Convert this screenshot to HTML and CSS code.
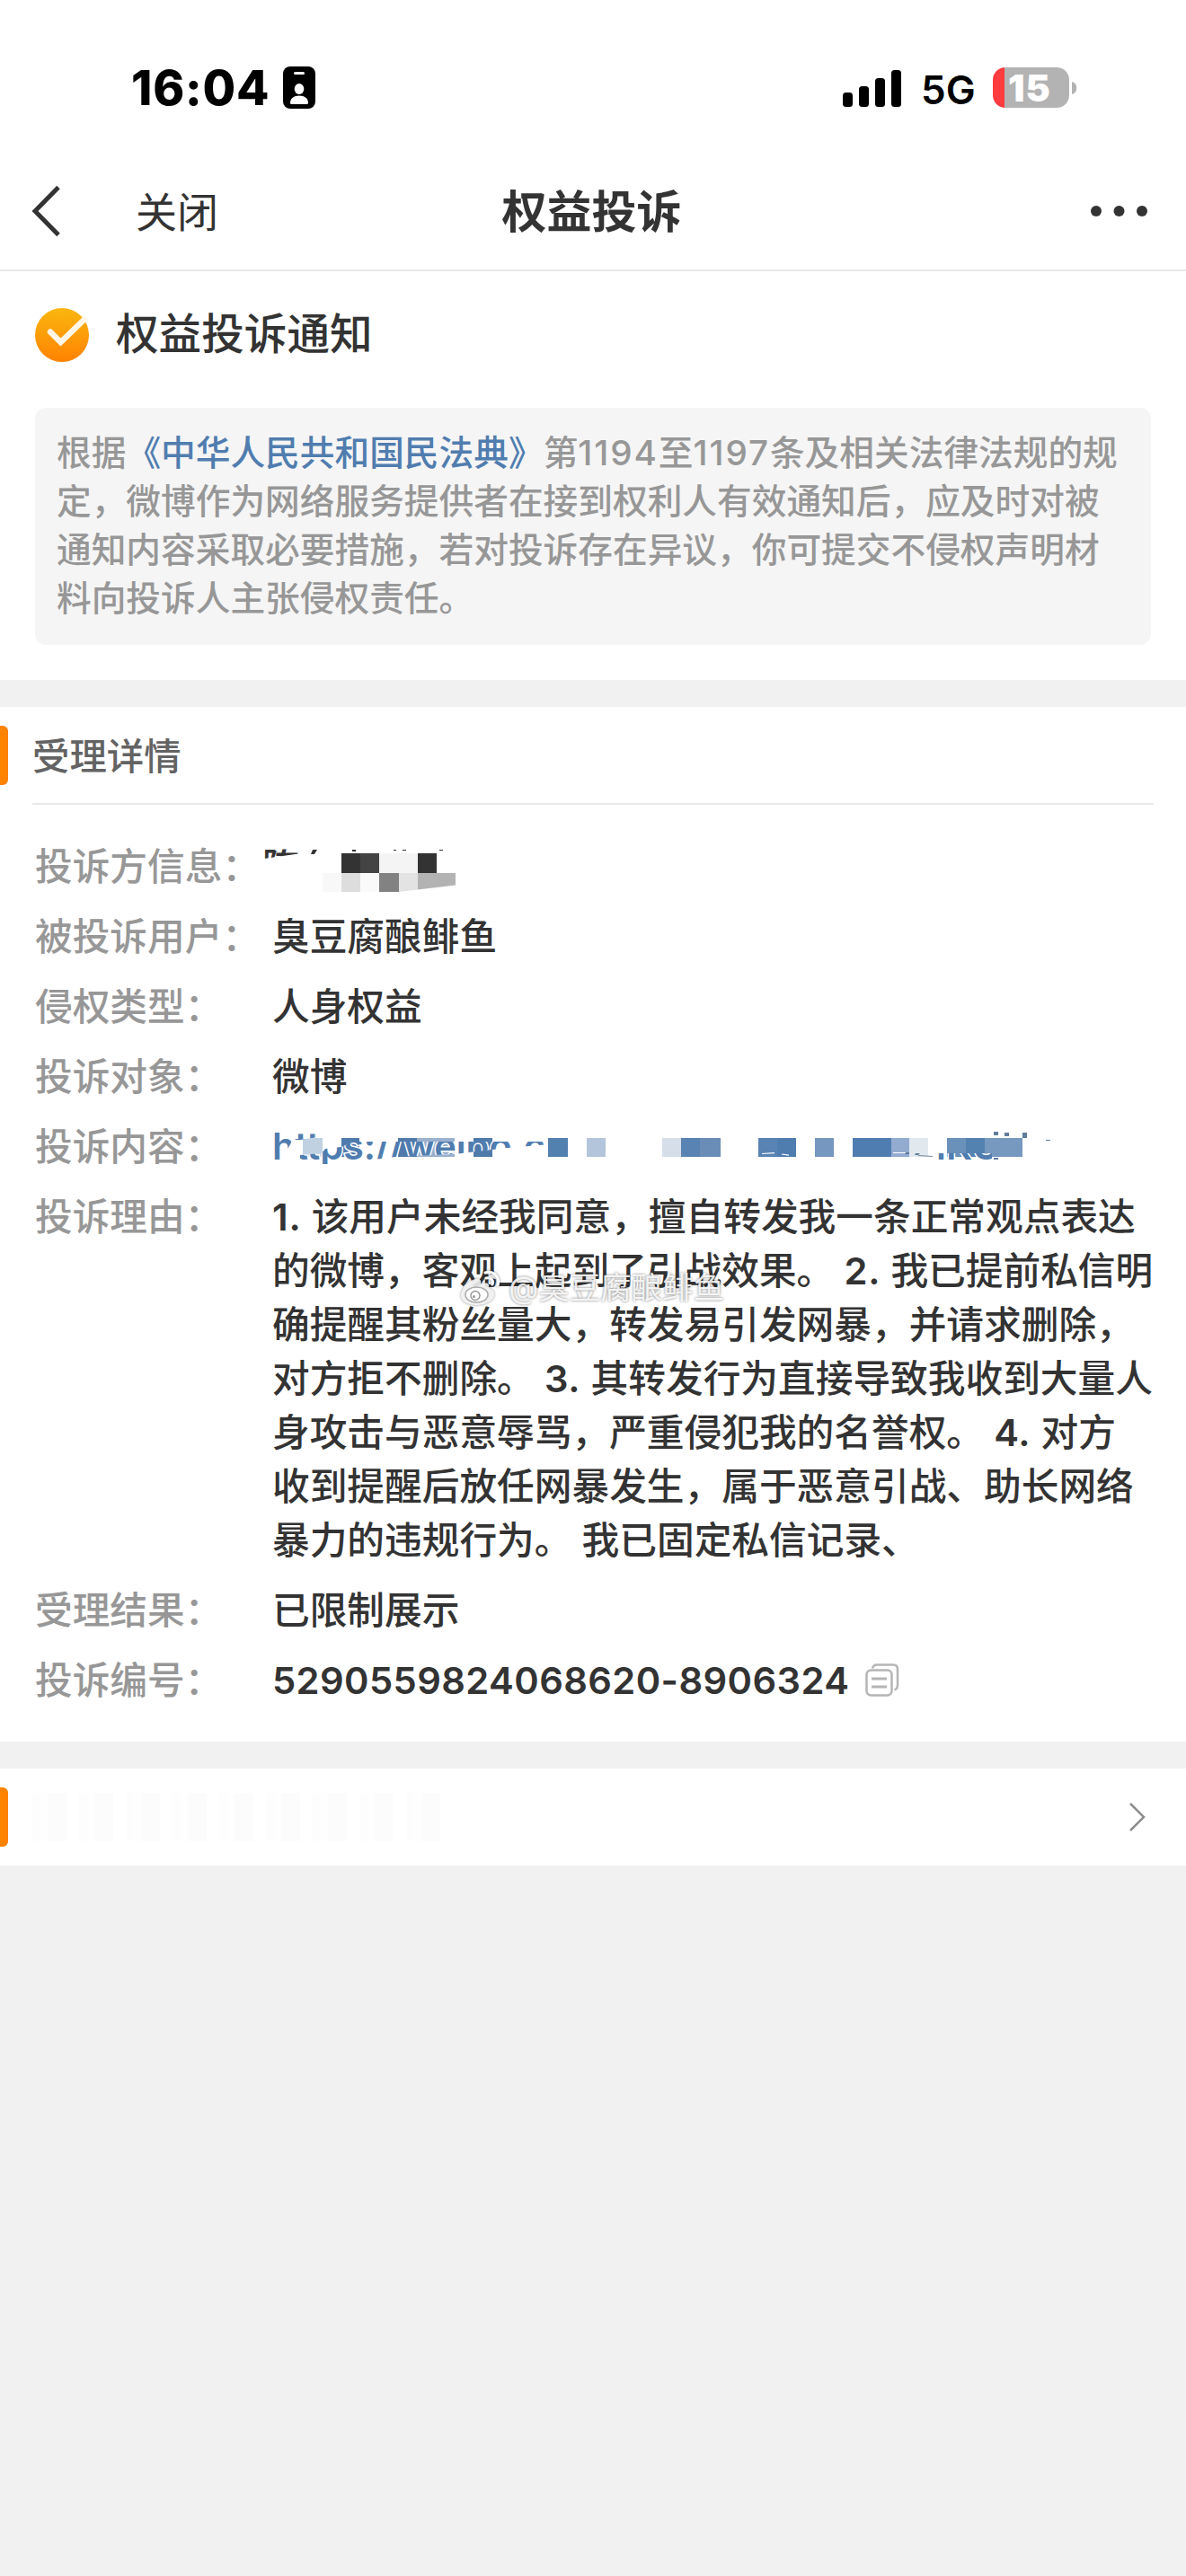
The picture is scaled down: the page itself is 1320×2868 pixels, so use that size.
FILE: index.html
```html
<!DOCTYPE html>
<html lang="zh-CN">
<head>
    <meta charset="UTF-8">
    <meta name="viewport" content="width=device-width, initial-scale=1.0">
    <title>权益投诉</title>
    <link rel="stylesheet" href="styles.css">
</head>
<body>

    <!-- 状态栏 -->
    <div class="status-bar">
        <div class="status-left">
            <span class="time">16:04</span>
            <svg class="id-card" width="36" height="47" viewBox="0 0 36 47">
                <rect width="36" height="47" rx="8" fill="#000"/>
                <rect x="12" y="6" width="12" height="3" rx="1.5" fill="#fff"/>
                <ellipse cx="18" cy="25" rx="5.3" ry="6" fill="#fff"/>
                <path d="M8 40.500C8 35.500 12 32.500 18 32.500S28 35.500 28 40.500Q28 42 26.500 42H9.500Q8 42 8 40.500Z" fill="#fff"/>
            </svg>
        </div>
        <div class="status-right">
            <svg class="signal" width="66" height="42" viewBox="0 0 66 42">
                <rect x="0" y="26" width="11" height="16" rx="3.500"/>
                <rect x="18" y="19" width="11" height="23" rx="3.500"/>
                <rect x="36" y="10" width="11" height="32" rx="3.500"/>
                <rect x="54" y="1" width="11" height="41" rx="3.500"/>
            </svg>
            <span class="network">5G</span>
            <div class="battery"><span>15</span></div>
            <svg class="battery-tip" width="6" height="14" viewBox="0 0 6 14">
                <path d="M0 0C7 1.500 7 12.500 0 14Z" fill="#b3b3b3"/>
            </svg>
        </div>
    </div>

    <!-- 导航 -->
    <div class="nav">
        <div class="nav-left">
            <svg width="34" height="60" viewBox="0 0 34 60">
                <path d="M30 3.500L4 30L30 56.500" fill="none" stroke="#333" stroke-width="5"/>
            </svg>
            <span class="nav-close">关闭</span>
        </div>
        <div class="nav-title">权益投诉</div>
        <svg class="nav-more" width="64" height="12" viewBox="0 0 64 12">
            <circle cx="6" cy="6" r="6"/>
            <circle cx="31.500" cy="6" r="6"/>
            <circle cx="57" cy="6" r="6"/>
        </svg>
    </div>

    <div class="notice">
        <div class="notice-title">
            <svg width="60" height="60" viewBox="0 0 60 60">
                <defs>
                    <linearGradient id="orange" x1="0" y1="0" x2="0" y2="1">
                        <stop offset="0" stop-color="#fab710"/>
                        <stop offset="1" stop-color="#ff8200"/>
                    </linearGradient>
                </defs>
                <circle cx="30" cy="30" r="30" fill="url(#orange)"/>
                <path d="M17 26.500L28.500 38L55 12.500" fill="none" stroke="#fff6e6" stroke-width="6.500" stroke-linecap="round"/>
            </svg>
            <span>权益投诉通知</span>
        </div>
        <div class="notice-box">根据<a>《中华人民共和国民法典》</a>第<span class="num">1194</span>至<span class="num">1197</span>条及相关法律法规的规<br>定，微博作为网络服务提供者在接到权利人有效通知后，应及时对被<br>通知内容采取必要措施，若对投诉存在异议，你可提交不侵权声明材<br>料向投诉人主张侵权责任。</div>
    </div>

    <div class="section">
        <div class="section-head">受理详情</div>
        <div class="detail">
            <div class="row">
                <div class="label">投诉方信息：</div>
                <!-- 打码的姓名 -->
                <svg class="mosaic" width="240" height="60" viewBox="290 934 240 60">
                    <clipPath id="name-clip"><path d="M290 945.500H332V950.500L294 956H290Z"/></clipPath>
                    <text x="292" y="979.500" class="mosaic-name" clip-path="url(#name-clip)">陈</text>
                    <path d="M348 946h5l-3 5h-4Z M392 946h4v2h-4Z M438 946h3v1h-3Z M448 946h4v1h-4Z M489 946h4v1h-4Z" fill="#333"/>
                    <path d="M380 950h21v22h-21Z M465 950h21v22h-21Z" fill="#333"/>
                    <path d="M401 950h21v22h-21Z" fill="#444"/>
                    <path d="M422 950h43v22h-43Z" fill="#f4f4f4"/>
                    <path d="M359 972h21v21h-21Z" fill="#f8f8f8"/>
                    <path d="M380 972h21v21h-21Z" fill="#ddd"/>
                    <path d="M401 972h21v21h-21Z" fill="#fafafa"/>
                    <path d="M422 972h22v21h-22Z" fill="#828282"/>
                    <path d="M444 972h21v18.500l-21 2.500Z" fill="#e3e3e3"/>
                    <path d="M465 972h42v13.500l-42 5Z" fill="#b3b3b3"/>
                </svg>
            </div>
            <div class="row">
                <div class="label">被投诉用户：</div>
                <div class="value">臭豆腐酿鲱鱼</div>
            </div>
            <div class="row">
                <div class="label">侵权类型：</div>
                <div class="value">人身权益</div>
            </div>
            <div class="row">
                <div class="label">投诉对象：</div>
                <div class="value">微博</div>
            </div>
            <div class="row">
                <div class="label">投诉内容：</div>
                <!-- 打码的链接 -->
                <svg class="mosaic" width="900" height="60" viewBox="290 1246 900 60">
                    <g>
                        <rect x="337" y="1267" width="22" height="21" fill="#c0d2e2"/>
                        <rect x="380" y="1267" width="20" height="21" fill="#4f7bac"/>
                        <rect x="443" y="1267" width="21" height="21" fill="#4f7aab"/>
                        <rect x="464" y="1267" width="42" height="21" fill="#9bb1cf"/>
                        <rect x="527" y="1267" width="21" height="21" fill="#4f7bab"/>
                        <rect x="610" y="1267" width="22" height="21" fill="#5280af"/>
                        <rect x="653" y="1267" width="21" height="21" fill="#b3c5da"/>
                        <rect x="737" y="1267" width="21" height="21" fill="#d6deea"/>
                        <rect x="758" y="1267" width="21" height="21" fill="#5883b2"/>
                        <rect x="779" y="1267" width="23" height="21" fill="#6a8db8"/>
                        <rect x="844" y="1267" width="21" height="21" fill="#5883b2"/>
                        <rect x="865" y="1267" width="21" height="21" fill="#4f7db0"/>
                        <rect x="907" y="1267" width="21" height="21" fill="#7597c0"/>
                        <rect x="949" y="1267" width="43" height="21" fill="#4f7db2"/>
                        <rect x="992" y="1267" width="20" height="21" fill="#94abd0"/>
                        <rect x="1012" y="1267" width="21" height="21" fill="#e1e9ef"/>
                        <rect x="1054" y="1267" width="21" height="21" fill="#6a91ba"/>
                        <rect x="1075" y="1267" width="21" height="21" fill="#5482b0"/>
                        <rect x="1096" y="1267" width="42" height="21" fill="#7799c0"/>
                    </g>
                    <clipPath id="url-clip">
                        <path d="M300 1255H314V1266L326 1268L322 1276L314 1290V1295H300Z M328 1262H354V1266L334 1269H328Z M334 1286L358 1284L362 1279L380 1277L392 1271H612V1274L565 1278L530 1282L505 1285L440 1288L408 1292L380 1296H334Z"/>
                    </clipPath>
                    <g clip-path="url(#url-clip)">
                        <text x="303" y="1291" class="mosaic-url" textLength="304">https://weibo.c</text>
                    </g>
                    <clipPath id="tail-clip"><path d="M1040 1284H1104V1292H1040Z"/></clipPath>
                    <g clip-path="url(#tail-clip)">
                        <text x="1042" y="1291" class="mosaic-url">iKU</text>
                    </g>
                    <path d="M1106 1260h5v4h-5Z M1118 1261h5v4h-5Z M1138 1261h5v6h-5Z M1164 1269h5v1h-5Z M1007 1283h5v2h-5Z M1019 1284h5l-2 2h-4Z M1106 1289h5v2h-5Z" fill="#5f7c9c"/>
                    <path d="M848 1284.500l14-.8 M870 1285l8 1.200 M994 1283.500h14" stroke="#fff" stroke-width="1.200"/>
                    <path d="M1022 1286.500l16 1" stroke="#7d8b9a" stroke-width="1"/>
                </svg>
            </div>
            <div class="row">
                <div class="label">投诉理由：</div>
                <div class="value"><b>1.</b> 该用户未经我同意，擅自转发我一条正常观点表达<br>的微博，客观上起到了引战效果。 <b>2.</b> 我已提前私信明<br>确提醒其粉丝量大，转发易引发网暴，并请求删除，<br>对方拒不删除。 <b>3.</b> 其转发行为直接导致我收到大量人<br>身攻击与恶意辱骂，严重侵犯我的名誉权。 <b>4.</b> 对方<br>收到提醒后放任网暴发生，属于恶意引战、助长网络<br>暴力的违规行为。 我已固定私信记录、</div>
                <!-- 水印 -->
                <div class="watermark">
                    <svg width="46" height="40" viewBox="0 0 46 40">
                        <path d="M17 10C9 12 1 21 1 28C1 35 9 39 18 39C30 39 38 33 38 27C38 23 35 21 32 20C33 15 30 13 23 16C24 11 22 9 17 10Z" fill="#fff" fill-opacity=".85"/>
                        <ellipse cx="18.500" cy="27.500" rx="12.500" ry="8.500" fill="#fff" stroke="#aaa" stroke-width="1.500"/>
                        <circle cx="17" cy="28.500" r="5" fill="#fff" stroke="#999" stroke-width="1.500"/>
                        <circle cx="15.500" cy="29.500" r="1.500" fill="#999"/>
                        <path d="M28 3C37 0 45 8 42 17 M29 9C34 8 38 11 36 16" fill="none" stroke="#fff" stroke-width="3" stroke-linecap="round"/>
                    </svg>
                    <span>@臭豆腐酿鲱鱼</span>
                </div>
            </div>
            <div class="row">
                <div class="label">受理结果：</div>
                <div class="value">已限制展示</div>
            </div>
            <div class="row">
                <div class="label">投诉编号：</div>
                <div class="value number">5290559824068620-8906324</div>
                <svg class="copy" width="38" height="38" viewBox="0 0 38 38">
                    <g fill="none" stroke="#b5b5b5" stroke-width="2.500">
                        <rect x="1.500" y="7.500" width="28" height="28" rx="5"/>
                        <path d="M8 5.500Q9 1.500 13 1.500H31Q36 1.500 36 6.500V24Q36 28.500 32.500 29.500"/>
                        <path d="M7 17H24M7 26H24" stroke-width="3"/>
                    </g>
                </svg>
            </div>
        </div>
    </div>

    <div class="section link">
        <div class="faded"></div>
        <svg width="20" height="34" viewBox="0 0 20 34">
            <path d="M2 2L17 17L2 32" fill="none" stroke="#8c8c8c" stroke-width="2.500"/>
        </svg>
    </div>

</body>
</html>
```
FILE: styles.css
```css
* {
    box-sizing: border-box;
}
body {
    margin: 0;
    min-height: 2868px;
    background-color: #f1f1f1;
    font-family: Inter, "Noto Sans CJK SC", sans-serif;
    color: #333;
    white-space: nowrap;
}
svg {
    display: block;
    flex: none;
}
.status-bar {
    height: 170px;
    padding: 26px 121px 0 146px;
    display: flex;
    justify-content: space-between;
    background-color: #fff;
    color: #000;
}
.status-left,
.status-right {
    display: flex;
    align-items: center;
    height: 143px;
}
.time {
    width: 169px;
    font-size: 53px;
    font-weight: 800;
    letter-spacing: 0.8px;
}
.network {
    width: 80px;
    margin-left: 21px;
    padding-top: 4px;
    font-size: 44px;
    font-weight: 600;
    letter-spacing: 0;
}
.battery {
    width: 85px;
    height: 45px;
    border-radius: 14px;
    background: linear-gradient(to right, #ff3b3f 13px, #b3b3b3 13px);
    color: #fff;
    font-size: 41px;
    font-weight: 900;
    line-height: 46px;
    letter-spacing: 1px;
    padding-left: 17px;
}
.battery-tip {
    margin-left: 3px;
}
.nav {
    height: 132px;
    padding: 0 42px 0 35px;
    display: grid;
    grid-template-columns: 1fr auto 1fr;
    align-items: center;
    background-color: #fff;
    border-bottom: 2px solid #e9e9e9;
}
.nav-left {
    display: flex;
    align-items: center;
}
.nav-close {
    margin-left: 82px;
    padding-top: 2px;
    font-size: 46px;
    line-height: 60px;
}
.nav-title {
    padding: 2px 0 0 4px;
    font-size: 50px;
    font-weight: 700;
    line-height: 60px;
}
.nav-more {
    justify-self: end;
    fill: #333;
}
.notice {
    height: 455px;
    padding: 41px 39px 0;
    background-color: #fff;
}
.notice-title {
    display: flex;
    align-items: center;
    gap: 30px;
    height: 60px;
    font-size: 47.6px;
    font-weight: 500;
    line-height: 60px;
}
.notice-title span {
    padding-bottom: 2px;
}
.notice-box {
    height: 264px;
    margin-top: 51px;
    padding: 23px 24px;
    border-radius: 12px;
    background-color: #f5f5f5;
    color: #979797;
    font-size: 38.7px;
    font-weight: 500;
    line-height: 54px;
}
.notice-box a {
    color: #507daf;
}
.notice-box .num {
    letter-spacing: 1.9px;
}
.section {
    margin-top: 30px;
    background-color: #fff;
    position: relative;
}
/* 左侧橙色标记 */
.section::before {
    content: "";
    position: absolute;
    left: 0;
    top: 21px;
    width: 9px;
    height: 66px;
    border-radius: 0 6px 6px 0;
    background-color: #ff8200;
}
.section-head {
    height: 109px;
    margin: 0 36px;
    border-bottom: 2px solid #e9e9e9;
    color: #636363;
    font-size: 41.4px;
    font-weight: 500;
    line-height: 110px;
}
.detail {
    height: 1043px;
    padding: 39px 39px 0;
    display: flex;
    flex-direction: column;
    gap: 18px;
    font-size: 41.7px;
    line-height: 60px;
}
.row {
    display: flex;
    position: relative;
}
.label {
    width: 264px;
    flex: none;
    color: #979797;
    font-weight: 500;
}
.value {
    font-weight: 500;
}
.value b {
    font-weight: 600;
    letter-spacing: 0.8px;
}
.number {
    width: 660px;
    font-weight: 600;
    letter-spacing: 0.4px;
}
.copy {
    margin-top: 11px;
}
.mosaic {
    margin: -1px 0 1px -13px;
}
.mosaic-name {
    font-size: 41.6px;
    font-weight: 500;
    fill: #333;
}
.mosaic-url {
    font-size: 41.6px;
    font-weight: 600;
    fill: #507daf;
    stroke: #fff;
    stroke-width: 3px;
    paint-order: stroke;
}
.watermark {
    position: absolute;
    left: 473px;
    top: 88px;
    display: flex;
    align-items: center;
    gap: 8px;
    height: 42px;
    color: rgba(255, 255, 255, 0.9);
    font-size: 34.5px;
    text-shadow: 0 0 3px rgba(0, 0, 0, 0.55);
}
.watermark svg {
    filter: drop-shadow(0 0 1.5px rgba(0, 0, 0, 0.5));
}
.link {
    height: 108px;
    padding: 0 44px 0 36px;
    display: flex;
    align-items: center;
    justify-content: space-between;
}
.faded {
    width: 459px;
    height: 54px;
    background: repeating-linear-gradient(to right, #fdfdfd 0 9px, #fefefe 9px 17px, #fcfcfc 17px 38px, #fff 38px 52px);
}
```
